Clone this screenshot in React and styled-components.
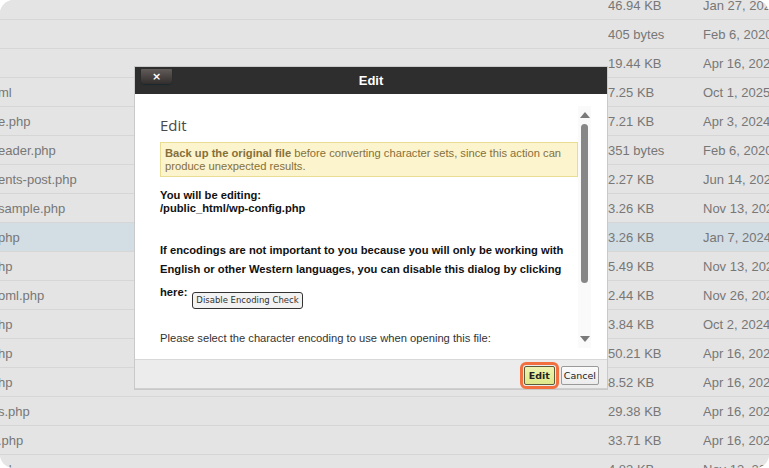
import React from 'react';
import styled, { createGlobalStyle } from 'styled-components';

const GlobalStyle = createGlobalStyle`
  html, body {
    margin: 0;
    padding: 0;
    background: #ffffff;
    overflow: hidden;
  }
`;

const Frame = styled.div`
  position: relative;
  width: 769px;
  height: 468px;
  border-radius: 14px;
  overflow: hidden;
  background-color: #e4e4e4;
  font-family: 'Liberation Sans', Arial, sans-serif;
`;

const FileList = styled.div`
  display: flex;
  flex-direction: column;
  margin-top: -9px;
`;

const FileRow = styled.div`
  display: grid;
  grid-template-columns: 608px 95px 1fr;
  align-items: center;
  height: 28px;
  border-bottom: 1px solid #d6d6d6;
  background-color: ${props => (props.selected ? '#d2dde4' : '#e4e4e4')};
  color: #777777;
  font-size: 13px;
  white-space: nowrap;
`;

const Cell = styled.div`
  overflow: hidden;
`;

const NameCell = styled(Cell)`
  margin-left: -2px;
`;

const Dialog = styled.div`
  position: absolute;
  left: 135px;
  top: 67px;
  width: 472px;
  display: flex;
  flex-direction: column;
  background: #ffffff;
  box-shadow: 0 0 0 1px #c9c9c9;
`;

const DialogHeader = styled.div`
  position: relative;
  height: 27px;
  display: flex;
  align-items: center;
  justify-content: center;
  background-color: #2e2e2e;
  color: #ffffff;
  font-weight: bold;
  font-size: 13px;
`;

const CloseButton = styled.div`
  position: absolute;
  left: 6px;
  top: 2px;
  width: 31px;
  height: 15px;
  display: flex;
  align-items: center;
  justify-content: center;
  border-radius: 1px 1px 4px 4px;
  background: linear-gradient(#615b59, #322e2d);
  box-shadow: 0 1px 1px #1a2a30;
  color: #ffffff;
  font-family: 'DejaVu Sans', sans-serif;
  font-weight: bold;
  font-size: 11px;
  line-height: 1;
`;

const DialogBody = styled.div`
  height: 265px;
  box-sizing: border-box;
  padding: 12px 16px 11px 25px;
`;

const ScrollArea = styled.div`
  display: flex;
  height: 242px;
  overflow: hidden;
`;

const Content = styled.div`
  flex: 1;
  padding-top: 9px;
  font-size: 11.2px;
  color: #222222;
`;

const Heading = styled.div`
  font-family: 'Open Sans', sans-serif;
  font-size: 15px;
  line-height: 20px;
  color: #4a4a4a;
  margin-bottom: 7px;
`;

const Notice = styled.div`
  padding: 4px 5px 3px 4px;
  line-height: 13px;
  background-color: #fcf4cd;
  border: 1px solid #e9dd94;
  color: #86703a;
`;

const FileInfo = styled.div`
  margin-top: 12px;
  line-height: 13px;
  font-weight: bold;
  color: #111111;
`;

const Explain = styled.div`
  margin-top: 26px;
  line-height: 19px;
  font-weight: bold;
  color: #111111;
`;

const SmallButton = styled.span`
  display: inline-block;
  margin: 13px 0 0 5px;
  padding: 0 3px;
  height: 15px;
  line-height: 15px;
  vertical-align: -7px;
  border: 1px solid #333333;
  border-radius: 3px;
  background: #f2f2f2;
  font-family: 'DejaVu Sans', sans-serif;
  font-weight: normal;
  font-size: 8.5px;
  color: #333333;
`;

const Prompt = styled.div`
  margin-top: 23px;
  line-height: 13px;
  color: #333333;
`;

const Scrollbar = styled.div`
  width: 13px;
  display: flex;
  flex-direction: column;
  align-items: center;
  background-color: #fafafa;
  padding: 6px 0 6px;
  box-sizing: border-box;
`;

const Arrow = styled.div`
  width: 0;
  height: 0;
  border-left: 5px solid transparent;
  border-right: 5px solid transparent;
  ${props =>
    props.down
      ? 'border-top: 6px solid #7a7a7a; margin-top: auto;'
      : 'border-bottom: 6px solid #7a7a7a;'}
`;

const Thumb = styled.div`
  width: 7px;
  height: 159px;
  margin-top: 6px;
  border-radius: 4px;
  background-color: #878787;
`;

const DialogFooter = styled.div`
  height: 30px;
  box-sizing: border-box;
  display: flex;
  justify-content: flex-end;
  align-items: flex-start;
  gap: 6px;
  padding: 6px 8px 0 0;
  background-color: #ececec;
  border-top: 1px solid #d8d8d8;
  border-bottom: 1px solid #cfcfcf;
`;

const FooterButton = styled.div`
  height: 19px;
  box-sizing: border-box;
  display: flex;
  align-items: center;
  padding: 0 ${props => (props.primary ? '4px' : '2px')};
  border: 1px solid ${props => (props.primary ? '#5c5c3a' : '#9a9a9a')};
  border-radius: 2px;
  background: ${props =>
    props.primary
      ? 'linear-gradient(#eef3b0, #dfe88a)'
      : 'linear-gradient(#fbfbfb, #ececec)'};
  font-family: 'DejaVu Sans', sans-serif;
  font-size: 9.5px;
  font-weight: ${props => (props.primary ? 'bold' : 'normal')};
  color: #222222;
  ${props =>
    props.primary &&
    `
    outline: 3px solid #f2703f;
    outline-offset: 1px;
  `}
`;

const files = [
  ['', '46.94 KB', 'Jan 27, 2020'],
  ['', '405 bytes', 'Feb 6, 2020'],
  ['', '19.44 KB', 'Apr 16, 2020'],
  ['ml', '7.25 KB', 'Oct 1, 2025'],
  ['e.php', '7.21 KB', 'Apr 3, 2024'],
  ['eader.php', '351 bytes', 'Feb 6, 2020'],
  ['ents-post.php', '2.27 KB', 'Jun 14, 2020'],
  ['sample.php', '3.26 KB', 'Nov 13, 2020'],
  ['php', '3.26 KB', 'Jan 7, 2024', true],
  ['hp', '5.49 KB', 'Nov 13, 2020'],
  ['oml.php', '2.44 KB', 'Nov 26, 2020'],
  ['hp', '3.84 KB', 'Oct 2, 2024'],
  ['hp', '50.21 KB', 'Apr 16, 2020'],
  ['hp', '8.52 KB', 'Apr 16, 2020'],
  ['s.php', '29.38 KB', 'Apr 16, 2020'],
  ['.php', '33.71 KB', 'Apr 16, 2020'],
  ['ml', '4.83 KB', 'Nov 13, 2020'],
];

const App = () => {
  return (
    <Frame>
      <GlobalStyle />
      <FileList>
        {files.map(([name, size, date, selected], i) => (
          <FileRow key={i} selected={selected}>
            <NameCell>{name}</NameCell>
            <Cell>{size}</Cell>
            <Cell>{date}</Cell>
          </FileRow>
        ))}
      </FileList>

      <Dialog>
        <DialogHeader>
          <CloseButton>×</CloseButton>
          Edit
        </DialogHeader>
        <DialogBody>
          <ScrollArea>
            <Content>
              <Heading>Edit</Heading>
              <Notice>
                <b>Back up the original file</b> before converting character
                sets, since this action can produce unexpected results.
              </Notice>
              <FileInfo>
                You will be editing:
                <br />
                /public_html/wp-config.php
              </FileInfo>
              <Explain>
                If encodings are not important to you because you will only be
                working with English or other Western languages, you can
                disable this dialog by clicking here:
                <SmallButton>Disable Encoding Check</SmallButton>
              </Explain>
              <Prompt>
                Please select the character encoding to use when opening this
                file:
              </Prompt>
            </Content>
            <Scrollbar>
              <Arrow />
              <Thumb />
              <Arrow down />
            </Scrollbar>
          </ScrollArea>
        </DialogBody>
        <DialogFooter>
          <FooterButton primary>Edit</FooterButton>
          <FooterButton>Cancel</FooterButton>
        </DialogFooter>
      </Dialog>
    </Frame>
  );
};

export default App;
